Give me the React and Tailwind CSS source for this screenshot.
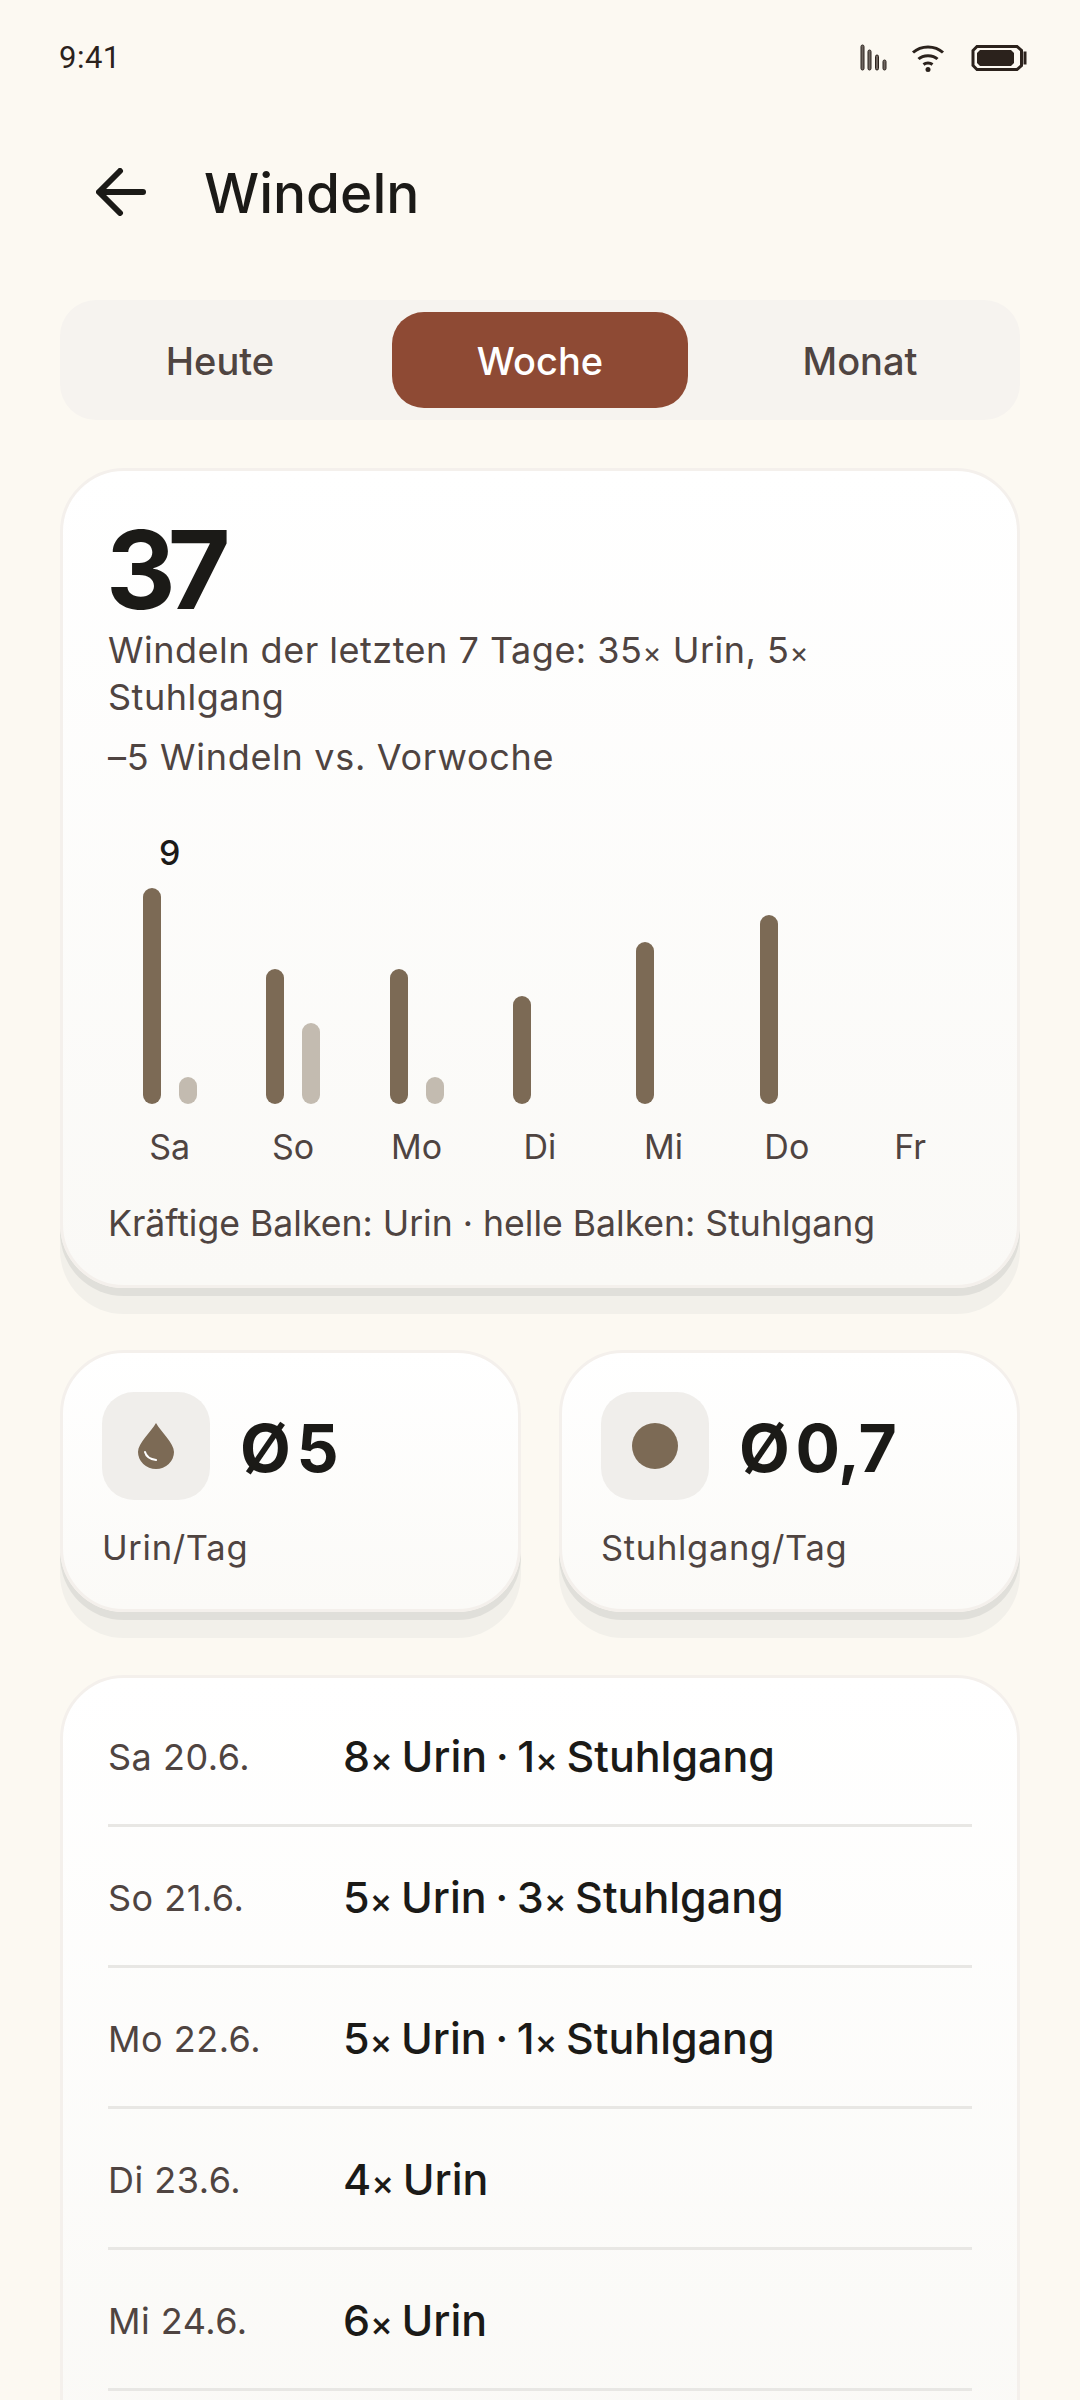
const FONT = "font-['Inter','Liberation_Sans',sans-serif]";

const days = [
  { label: 'Sa', urin: 8, stuhl: 1 },
  { label: 'So', urin: 5, stuhl: 3 },
  { label: 'Mo', urin: 5, stuhl: 1 },
  { label: 'Di', urin: 4, stuhl: 0 },
  { label: 'Mi', urin: 6, stuhl: 0 },
  { label: 'Do', urin: 7, stuhl: 0 },
  { label: 'Fr', urin: 0, stuhl: 0 },
];

const rows = [
  ['Sa 20.6.', '8× Urin · 1× Stuhlgang'],
  ['So 21.6.', '5× Urin · 3× Stuhlgang'],
  ['Mo 22.6.', '5× Urin · 1× Stuhlgang'],
  ['Di 23.6.', '4× Urin'],
  ['Mi 24.6.', '6× Urin'],
];

// the × is set smaller than the digits around it
const Counts = ({ text }) =>
  text.split('×').map((part, i) => (
    <span key={i}>
      {i > 0 && <span className="text-[0.8em] leading-none">×</span>}
      {part}
    </span>
  ));

const StatusIcons = () => (
  <svg width="170" height="30" viewBox="0 0 170 30" fill="none">
    {/* signal */}
    <g fill="#6f6660" stroke="#2b221c" strokeWidth="1">
      <rect x="1" y="1" width="3" height="25" rx="1.5" />
      <rect x="8" y="6" width="3" height="20" rx="1.5" />
      <rect x="15.500" y="11" width="3" height="15" rx="1.5" />
      <rect x="23" y="16" width="3" height="10" rx="1.5" />
    </g>
    {/* wifi */}
    <g fill="none" stroke="#2b221c" strokeWidth="3">
      <path d="M53 8.500 C61 1 75 1 83 8.500" />
      <path d="M58.500 15 C63 10.500 73 10.500 77.500 15" />
      <path d="M63.500 20.500 C66 18.500 70 18.500 72.500 20.500" />
    </g>
    <circle cx="68" cy="25.500" r="2.500" fill="#2b221c" />
    {/* battery */}
    <path d="M117 2.500 H157 L161.500 6.500 V21.500 L157 25.500 H117 L113 21.500 V6.500 Z" stroke="#2b221c" strokeWidth="3" fill="none" />
    <path d="M120 6 H151 L154 9 V19 L151 22 H120 L117 19 V9 Z" fill="#2b221c" />
    <rect x="163.500" y="7.500" width="3" height="13" fill="#2b221c" />
  </svg>
);

const Tab = ({ label, active }) => (
  <div className={`flex-1 flex items-center justify-center pt-[3px] rounded-[32px] text-[38px] font-[450] ${active ? 'bg-[#8e4a34] text-white' : 'text-[#4f4441]'}`}>
    {label}
  </div>
);

const Bar = ({ value, light }) => (
  <div
    className={`w-[18px] rounded-full ${light ? 'bg-[#c3bbb0]' : 'bg-[#7c6a55]'}`}
    style={{ height: value * 27 }}
  />
);

const StatCard = ({ icon, value, label }) => (
  <div className="flex-1 h-[262px] rounded-[64px] border-[3px] border-[#f4f0ec] bg-linear-to-b from-white to-[#fbfaf7] shadow-[0_8px_0_#e0dfda,0_26px_0_#f2f0ea] px-[39px] pt-[39px]">
    <div className="flex items-center gap-[30px]">
      <div className="w-[108px] h-[108px] rounded-[32px] bg-[#f0eeeb] flex items-center justify-center">
        {icon}
      </div>
      <div className="pt-[4px] text-[66px] leading-none font-bold text-[#1b1a17] [word-spacing:-10px]">{value}</div>
    </div>
    <div className="mt-[26px] text-[34.500px] leading-[44px] tracking-[0.7px] text-[#4f4441]">{label}</div>
  </div>
);

const App = () => (
  <div className={`w-[1080px] h-[2400px] overflow-hidden bg-[#fcf9f2] ${FONT}`}>
    <div className="h-[114px] pl-[59px] pr-[50px] pt-[3px] flex items-center justify-between">
      <span className="text-[31px] tracking-[0.5px] text-[#2b221c] font-['Roboto',sans-serif]">9:41</span>
      <StatusIcons />
    </div>

    <div className="h-[156px] pl-[96px] flex items-center gap-[58px]">
      <svg width="50" height="48" viewBox="0 0 50 48" fill="none" stroke="#1b1a17" strokeWidth="6" strokeLinecap="round" strokeLinejoin="round">
        <path d="M47 24 H4" />
        <path d="M24 3 L3 24 L24 45" />
      </svg>
      <h1 className="pt-[2px] text-[55px] font-medium text-[#1b1a17]">Windeln</h1>
    </div>

    <div className="mx-[60px] mt-[30px] h-[120px] rounded-[36px] bg-[#f6f3ef] p-[12px] flex gap-[24px]">
      <Tab label="Heute" />
      <Tab label="Woche" active />
      <Tab label="Monat" />
    </div>

    <div className="mx-[60px] mt-[48px] h-[820px] rounded-[64px] border-[3px] border-[#f4f0ec] bg-linear-to-b from-white to-[#faf9f6] shadow-[0_8px_0_#e0dfda,0_26px_0_#f2f0ea] px-[45px] pt-[45px]">
      <div className="text-[108px] leading-[108px] font-bold text-[#1b1a17] tracking-[-8px] -ml-[2px]">37</div>
      <p className="mt-[3px] text-[36px] leading-[47px] tracking-[0.5px] text-[#4f4441]"><Counts text="Windeln der letzten 7 Tage: 35× Urin, 5× Stuhlgang" /></p>
      <p className="mt-[13px] text-[36px] leading-[47px] tracking-[0.7px] text-[#4f4441]">–5 Windeln vs. Vorwoche</p>

      <div className="mt-[52px] flex">
        {days.map((d, i) => (
          <div key={d.label} className="flex-1 flex flex-col items-center">
            <div className="h-[40px] text-[34px] leading-[40px] font-medium text-[#1b1a17]">{i === 0 ? '9' : ''}</div>
            <div className="mt-[15px] h-[216px] flex items-end gap-[18px]">
              <Bar value={d.urin} />
              <Bar value={d.stuhl} light />
            </div>
            <div className="mt-[23px] text-[34px] leading-[40px] text-[#4f4441]">{d.label}</div>
          </div>
        ))}
      </div>

      <p className="mt-[35px] text-[35.600px] leading-[44px] text-[#4f4441]">Kräftige Balken: Urin · helle Balken: Stuhlgang</p>
    </div>

    <div className="mx-[60px] mt-[62px] flex gap-[38px]">
      <StatCard
        label="Urin/Tag"
        value="Ø 5"
        icon={
          <svg width="38" height="46" viewBox="0 0 38 46">
            <path d="M19 0 C24 9 37 20 37 29 A18 17 0 0 1 1 29 C1 20 14 9 19 0 Z" fill="#7c6a55" />
            <path d="M8 29 C9 33 12 36 19 37" fill="none" stroke="#fff" strokeWidth="2" strokeLinecap="round" />
          </svg>
        }
      />
      <StatCard
        label="Stuhlgang/Tag"
        value="Ø 0,7"
        icon={<div className="w-[46px] h-[46px] rounded-full bg-[#7c6a55]" />}
      />
    </div>

    <div className="mx-[60px] mt-[63px] h-[800px] rounded-[64px] border-[3px] border-[#f4f0ec] bg-linear-to-b from-white to-[#faf9f6] px-[45px]">
      {rows.map(([date, text]) => (
        <div key={date} className="h-[141px] first:h-[149px] first:pt-[11px] flex items-center pt-[3px] border-b-[3px] border-[#e8e7e4]">
          <div className="w-[235px] text-[36px] tracking-[0.5px] text-[#4f4441]">{date}</div>
          <div className="text-[43px] font-medium text-[#1b1a17] [word-spacing:-3px]"><Counts text={text} /></div>
        </div>
      ))}
    </div>
  </div>
);

export default App;
